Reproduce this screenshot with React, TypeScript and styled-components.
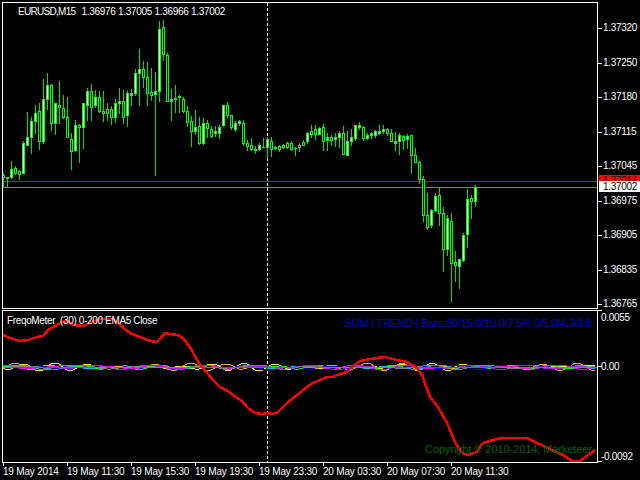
import React from 'react';
import styled, { createGlobalStyle } from 'styled-components';

// wick top, wick bottom, body top, body bottom, 1 = white body. x comes from the index.
const candles: number[][] = [
	[173, 187, 175, 177, 0], [177, 187, 177, 178, 1], [161, 178, 169, 177, 1], [166, 174, 168, 173, 0],
	[170, 179, 171, 174, 0], [141, 173, 143, 173, 1], [112, 145, 137, 145, 1], [117, 153, 121, 137, 1],
	[105, 133, 113, 121, 1], [103, 149, 111, 141, 0], [79, 143, 99, 141, 1], [73, 109, 85, 99, 1],
	[84, 130, 85, 123, 0], [103, 134, 103, 123, 1], [81, 123, 105, 107, 0], [95, 118, 108, 117, 0],
	[97, 137, 117, 137, 0], [133, 169, 139, 151, 0], [120, 151, 125, 150, 1], [124, 162, 125, 127, 0],
	[103, 148, 103, 127, 1], [88, 120, 91, 105, 1], [84, 120, 91, 107, 0], [90, 107, 97, 105, 1],
	[91, 112, 97, 111, 0], [91, 121, 111, 113, 0], [103, 120, 109, 113, 0], [106, 124, 109, 117, 0],
	[99, 122, 103, 117, 1], [88, 113, 101, 103, 1], [90, 123, 101, 117, 0], [91, 126, 93, 115, 1],
	[89, 105, 93, 95, 1], [69, 95, 73, 93, 1], [49, 105, 69, 73, 1], [61, 87, 69, 77, 0],
	[62, 105, 77, 93, 0], [68, 100, 92, 95, 0], [72, 175, 91, 94, 1], [21, 101, 29, 91, 1],
	[20, 60, 27, 54, 0], [53, 101, 55, 101, 0], [89, 120, 99, 101, 1], [85, 112, 98, 99, 1],
	[95, 112, 96, 97, 1], [97, 112, 99, 111, 0], [106, 126, 111, 122, 0], [116, 146, 121, 131, 0],
	[110, 134, 127, 131, 1], [117, 144, 126, 143, 0], [118, 144, 123, 143, 1], [120, 137, 123, 128, 0],
	[126, 137, 129, 136, 0], [126, 136, 131, 133, 1], [125, 138, 127, 133, 1], [105, 126, 105, 125, 1],
	[102, 117, 105, 115, 0], [115, 129, 115, 127, 0], [121, 131, 123, 129, 1], [120, 125, 121, 123, 1],
	[120, 145, 123, 143, 0], [140, 150, 143, 146, 0], [138, 150, 145, 149, 0], [146, 153, 149, 150, 0],
	[143, 150, 145, 149, 1], [138, 147, 147, 147, 1], [137, 158, 139, 147, 1], [137, 156, 141, 149, 0],
	[146, 149, 147, 148, 1], [145, 151, 146, 149, 0], [144, 148, 145, 147, 0], [142, 148, 143, 147, 0],
	[141, 150, 143, 149, 0], [147, 155, 148, 148, 1], [143, 151, 145, 147, 0], [140, 145, 142, 145, 0],
	[132, 143, 133, 141, 1], [125, 137, 131, 134, 0], [125, 139, 129, 134, 0], [127, 134, 128, 134, 1],
	[124, 150, 127, 141, 0], [133, 150, 137, 140, 1], [135, 145, 137, 140, 0], [133, 146, 137, 139, 1],
	[131, 147, 133, 137, 1], [126, 154, 133, 154, 0], [131, 155, 141, 155, 1], [129, 145, 137, 141, 1],
	[125, 140, 125, 138, 1], [122, 129, 125, 127, 1], [126, 140, 127, 138, 0], [133, 139, 135, 138, 1],
	[132, 138, 133, 135, 1], [130, 137, 131, 135, 1], [125, 134, 131, 133, 1], [125, 133, 129, 131, 1],
	[128, 135, 129, 133, 0], [129, 141, 133, 141, 0], [132, 150, 141, 143, 1], [133, 154, 135, 141, 1],
	[135, 149, 136, 140, 0], [134, 148, 136, 139, 1], [135, 173, 135, 155, 0], [148, 162, 155, 162, 0],
	[161, 183, 162, 179, 0], [176, 221, 179, 215, 0], [193, 229, 215, 227, 0], [209, 227, 210, 225, 1],
	[193, 211, 196, 210, 1], [188, 225, 195, 213, 0], [207, 271, 213, 249, 0], [215, 255, 218, 249, 1],
	[213, 301, 221, 263, 0], [251, 281, 262, 265, 0], [259, 288, 259, 266, 1], [233, 261, 235, 260, 1],
	[189, 247, 199, 234, 1], [195, 218, 198, 201, 0], [185, 206, 187, 201, 1],
];

const redLine =
	'3,335 10,338 20,341 28,340 37,337 43,336 48,330 55,326 62,322 67,321 73,325 83,326 92,322 100,319 113,319 120,325 130,333 140,337 150,341 157,342 160,339 165,333 170,334 178,335 183,338 190,347 197,360 203,368 213,380 220,387 228,391 237,398 242,401 248,408 255,413 262,414 267,413 273,414 278,412 287,403 297,395 307,387 313,383 320,380 327,377 333,377 340,374 347,372 353,366 360,361 370,359 385,357 397,360 407,362 417,368 422,375 430,397 438,407 447,423 455,442 462,453 468,455 477,452 483,443 493,440 502,438 527,438 537,443 550,449 563,455 572,461 580,461 588,455 595,450';

const priceLabels = ['1.37320', '1.37250', '1.37180', '1.37115', '1.37045', '1.36975', '1.36905', '1.36835', '1.36765'];
const timeLabels = [
	'19 May 2014', '19 May 11:30', '19 May 15:30', '19 May 19:30',
	'19 May 23:30', '20 May 03:30', '20 May 07:30', '20 May 11:30',
];

const noiseColors = ['#ffff00', '#ffa500', '#00ff00', '#0000ff', '#00bfff', '#ff00ff', '#a020f0', '#808080'];

// the small oscillator waves all stay close to the zero level
const wave = (series: number, amp: number) => {
	const pts: string[] = [];
	for (let x = 3; x < 597; x += 4) {
		const env = 0.55 + 0.45 * Math.sin(x / 31 + series * 1.7);
		const y = 367 + Math.round(amp * env * Math.sin(x / (5 + series * 0.6) + series * 2.1));
		pts.push(`${x},${y}`);
	}
	return pts.join(' ');
};

const GlobalStyle = createGlobalStyle`
	html, body {
		margin: 0;
		background: #000;
	}
`;

const Screen = styled.div`
	width: 640px;
	height: 480px;
	overflow: hidden;
	background: #000;
	padding-top: 2px;
	box-sizing: border-box;
	font-family: 'Liberation Sans', Arial, sans-serif;
	font-size: 10px;
	letter-spacing: -0.3px;
	color: #fff;
`;

const Row = styled.div<{ $height: number; $gap?: number }>`
	display: flex;
	height: ${(p) => p.$height}px;
	margin-bottom: ${(p) => p.$gap ?? 0}px;
	padding-left: 2px;
`;

const Pane = styled.div`
	position: relative;
	width: 596px;
	box-sizing: border-box;
	border: 1px solid #fff;
	overflow: hidden;
`;

const Plot = styled.svg`
	display: block;
	width: 594px;
	height: 100%;
	shape-rendering: crispEdges;
`;

const Legend = styled.div`
	position: absolute;
	white-space: pre;
	line-height: 12px;
`;

const ChartTitle = styled(Legend)`
	left: 15px;
	top: 3px;
`;

const SymbolName = styled.span`
	letter-spacing: -0.7px;
	margin-right: 1px;
`;

const IndicatorTitle = styled(Legend)`
	left: 4px;
	top: 4px;
	letter-spacing: -0.35px;
`;

const TrendNote = styled(Legend)`
	right: 5px;
	top: 5px;
	font-size: 11px;
	line-height: 14px;
	letter-spacing: -0.22px;
	color: #0000d0;
`;

const CopyrightNote = styled(Legend)`
	right: 5px;
	bottom: 6px;
	font-size: 11px;
	line-height: 14px;
	letter-spacing: -0.08px;
	color: #006400;
`;

const PriceAxis = styled.div`
	position: relative;
	flex: 1;
	display: flex;
	flex-direction: column;
	justify-content: space-between;
	padding: 20px 0 0;
	height: 288px;
`;

const AxisLabel = styled.div`
	position: relative;
	padding-left: 5px;
	height: 12px;
	line-height: 12px;

	&::before {
		content: '';
		position: absolute;
		left: 0;
		top: 6px;
		width: 4px;
		height: 1px;
		background: #fff;
	}
`;

const IndicatorAxis = styled.div`
	flex: 1;
	display: flex;
	flex-direction: column;
`;

const IndicatorValue = styled.div<{ $skip: number; $tick: number }>`
	position: relative;
	padding-left: 3px;
	height: 12px;
	line-height: 12px;
	margin-top: ${(p) => p.$skip}px;

	&::before {
		content: '';
		position: absolute;
		left: 0;
		top: ${(p) => p.$tick}px;
		width: 4px;
		height: 1px;
		background: #fff;
	}
`;

const PriceTag = styled.div<{ $bg: string; $top: number; $height: number }>`
	position: absolute;
	left: 1px;
	right: 0;
	top: ${(p) => p.$top}px;
	height: ${(p) => p.$height}px;
	overflow: hidden;
	line-height: 11px;
	padding-left: 4px;
	background: ${(p) => p.$bg};
	color: #000;
`;

const TimeAxis = styled.div`
	display: flex;
	padding-left: 3px;
`;

const TimeLabel = styled.div`
	position: relative;
	width: 64px;
	flex: none;
	padding-top: 3px;
	line-height: 12px;
	white-space: nowrap;
	letter-spacing: -0.2px;

	&::before {
		content: '';
		position: absolute;
		left: 0;
		top: 0;
		width: 1px;
		height: 3px;
		background: #fff;
	}
`;

const Candle: React.FC<{ index: number; data: number[] }> = ({ index, data }) => {
	const [wickTop, wickBottom, bodyTop, bodyBottom, up] = data;
	const x = 3 + index * 4;
	return (
		<g>
			<rect x={x} y={wickTop} width={1} height={wickBottom - wickTop + 1} fill="#00e000" />
			{bodyBottom - bodyTop < 1 ? (
				<rect x={x - 1} y={bodyTop} width={3} height={1} fill="#00ff00" />
			) : (
				<rect
					x={x - 0.5}
					y={bodyTop + 0.5}
					width={2}
					height={bodyBottom - bodyTop}
					fill={up ? '#fff' : '#000'}
					stroke="#00ff00"
					strokeWidth={1}
				/>
			)}
		</g>
	);
};

const Crosshair: React.FC<{ top: number; bottom: number }> = ({ top, bottom }) => (
	<line x1={267.5} x2={267.5} y1={top} y2={bottom} stroke="#fff" strokeDasharray="3 2" />
);

export default function App() {
	return (
		<Screen>
			<GlobalStyle />
			<Row $height={307} $gap={1}>
				<Pane>
					<Plot viewBox="3 3 594 305">
						<rect x={3} y={181} width={594} height={1} fill="#e00000" />
						<rect x={3} y={187} width={594} height={1} fill="#808080" />
						<Crosshair top={3} bottom={308} />
						{candles.map((c, i) => (
							<Candle key={i} index={i} data={c} />
						))}
					</Plot>
					<ChartTitle>
						<SymbolName>EURUSD,M15</SymbolName>  1.36976 1.37005 1.36966 1.37002
					</ChartTitle>
				</Pane>
				<PriceAxis>
					{priceLabels.map((label) => (
						<AxisLabel key={label}>{label}</AxisLabel>
					))}
					<PriceTag $bg="#ff0000" $top={173} $height={6}>1.37014</PriceTag>
					<PriceTag $bg="#fff" $top={179} $height={11}>1.37002</PriceTag>
				</PriceAxis>
			</Row>
			<Row $height={153}>
				<Pane>
					<Plot viewBox="3 311 594 151">
						<Crosshair top={311} bottom={462} />
						<rect x={3} y={367} width={594} height={1} fill="#808080" />
						{noiseColors.map((color, i) => (
							<polyline
								key={color}
								points={wave(i, i < 2 ? 4 : 2.4)}
								fill="none"
								stroke={color}
								strokeWidth={1}
							/>
						))}
						<polyline points={redLine} fill="none" stroke="#ff0000" strokeWidth={2.5} strokeLinejoin="round" />
					</Plot>
					<IndicatorTitle>FreqoMeter  (30) 0-200 EMA5 Close</IndicatorTitle>
					<TrendNote>SUM | TREND | Bars:30/15.0/10.0/7.5/6.0/5.0/4.3/3.8</TrendNote>
					<CopyrightNote>Copyright © 2010-2014, Marketeer</CopyrightNote>
				</Pane>
				<IndicatorAxis>
					<IndicatorValue $skip={2} $tick={-2}>0.0055</IndicatorValue>
					<IndicatorValue $skip={37} $tick={5}>0.00</IndicatorValue>
					<IndicatorValue $skip={78} $tick={10}>-0.0092</IndicatorValue>
				</IndicatorAxis>
			</Row>
			<TimeAxis>
				{timeLabels.map((label) => (
					<TimeLabel key={label}>{label}</TimeLabel>
				))}
			</TimeAxis>
		</Screen>
	);
}
